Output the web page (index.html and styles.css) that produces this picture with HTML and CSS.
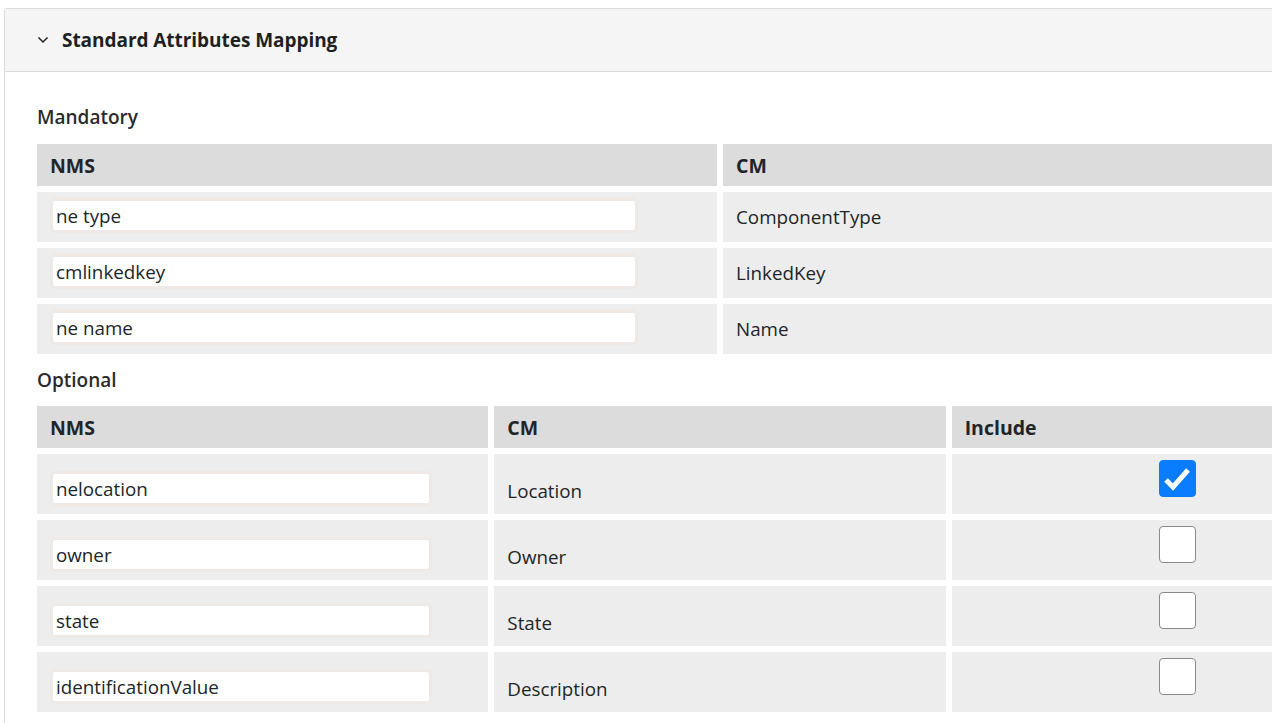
FILE: index.html
```html
<!DOCTYPE html>
<html lang="en">
<head>
<meta charset="utf-8">
<title>Standard Attributes Mapping</title>
<link rel="stylesheet" href="styles.css">
</head>
<body>
<section class="panel">
  <div class="panel-header">
    <svg class="chevron" width="12" height="8" viewBox="0 0 12 8"><path d="M1.5 1.5 L6 6 L10.5 1.5" fill="none" stroke="#222" stroke-width="1.5"/></svg>
    <span class="panel-title">Standard Attributes Mapping</span>
  </div>
  <div class="panel-body">
    <div class="section-label label-first">Mandatory</div>
    <table class="map-table mandatory">
      <colgroup><col class="c-half"><col class="c-half"></colgroup>
      <thead><tr><th>NMS</th><th>CM</th></tr></thead>
      <tbody>
        <tr><td class="nms"><input class="field" type="text" value="ne type"></td><td class="cm">ComponentType</td></tr>
        <tr><td class="nms"><input class="field" type="text" value="cmlinkedkey"></td><td class="cm">LinkedKey</td></tr>
        <tr><td class="nms"><input class="field" type="text" value="ne name"></td><td class="cm">Name</td></tr>
      </tbody>
    </table>
    <div class="section-label">Optional</div>
    <table class="map-table optional">
      <colgroup><col class="c-third"><col class="c-third"><col class="c-third"></colgroup>
      <thead><tr><th>NMS</th><th>CM</th><th>Include</th></tr></thead>
      <tbody>
        <tr><td class="nms"><input class="field" type="text" value="nelocation"></td><td class="cm">Location</td><td class="inc"><span class="check checked"><svg width="30" height="28" viewBox="0 0 30 28"><path d="M4 15 L11 22 L26 5" fill="none" stroke="#fff" stroke-width="5"/></svg></span></td></tr>
        <tr><td class="nms"><input class="field" type="text" value="owner"></td><td class="cm">Owner</td><td class="inc"><span class="check"></span></td></tr>
        <tr><td class="nms"><input class="field" type="text" value="state"></td><td class="cm">State</td><td class="inc"><span class="check"></span></td></tr>
        <tr><td class="nms"><input class="field" type="text" value="identificationValue"></td><td class="cm">Description</td><td class="inc"><span class="check"></span></td></tr>
      </tbody>
    </table>
  </div>
</section>
</body>
</html>
```
FILE: styles.css
```css
html, body {
  overflow: hidden;
}
body {
  margin: 8px 0 0 4px;
  font-family: "Open Sans", "Noto Sans", "Liberation Sans", sans-serif;
  color: #212529;
  background: #fff;
}
.panel {
  width: 1440px;
  border: 1px solid #dadada;
  border-right: none;
  border-radius: 3px 0 0 0;
}
.panel-header {
  height: 63px;
  background: #f5f5f5;
  border-bottom: 1px solid #d9d9d9;
  display: flex;
  align-items: center;
  padding-left: 32px;
  box-sizing: border-box;
}
.chevron {
  margin-right: 13px;
  margin-top: 0;
}
.panel-title {
  font-weight: 700;
  font-size: 19px;
  letter-spacing: -0.05px;
  color: #1f1f1f;
}
.panel-body {
  padding: 30px 0 40px 26px;
}
.section-label {
  font-size: 19px;
  font-weight: 600;
  line-height: 30px;
  margin: 5px 0 5px 6px;
  color: #2b2b2b;
}
.label-first {
  margin-top: 0;
  margin-bottom: 6px;
}
.map-table {
  border-collapse: separate;
  border-spacing: 6px;
  width: 1378px;
  table-layout: fixed;
  margin: 0;
}
.map-table th {
  background: #dcdcdc;
  height: 42px;
  padding: 0 13px;
  text-align: left;
  font-size: 19.5px;
  font-weight: 700;
  box-sizing: border-box;
}
.map-table td {
  background: #ededed;
  font-size: 18.8px;
  box-sizing: border-box;
}
.mandatory td {
  height: 50px;
  padding: 0 13px;
  vertical-align: middle;
}
.mandatory td.nms {
  padding: 6px 12px 0 13px;
  vertical-align: top;
}
.mandatory .field {
  width: 588px;
}
.optional td {
  height: 60px;
  vertical-align: top;
}
.optional td.nms {
  padding: 17px 12px 0 13px;
}
.optional .field {
  width: 382px;
}
.optional td.cm {
  padding: 22px 13px 0;
  line-height: 30px;
}
.optional td.inc {
  padding: 6px 0 0;
  text-align: center;
}
.field {
  display: block;
  height: 35px;
  box-sizing: border-box;
  border: 3px solid #efe9e6;
  border-radius: 5px;
  background: #fff;
  padding: 0 3px;
  font-family: inherit;
  font-size: 18.8px;
  color: #212529;
  outline: none;
}
.check {
  display: inline-flex;
  align-items: center;
  justify-content: center;
  width: 37px;
  height: 37px;
  box-sizing: border-box;
  border: 1px solid #8a8a8a;
  border-radius: 4px;
  background: #fff;
  vertical-align: top;
}
.check.checked {
  background: #0a7cff;
  border-color: #0a7cff;
}
```
